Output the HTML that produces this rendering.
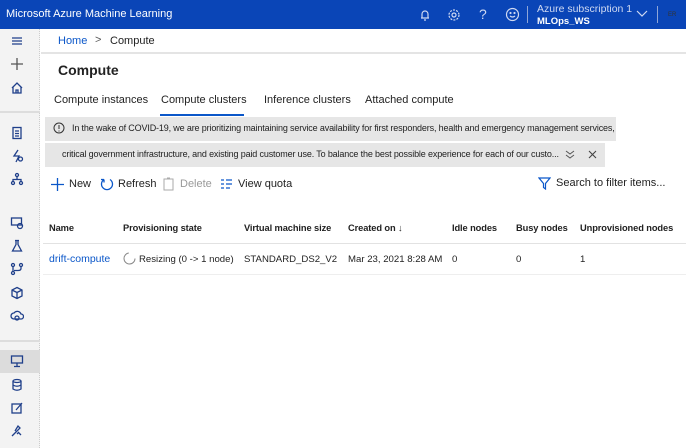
<!DOCTYPE html>
<html><head><style>
*{margin:0;padding:0;box-sizing:border-box}
body{width:686px;height:448px;overflow:hidden;background:#fff;font-family:"Liberation Sans",sans-serif;color:#222;position:relative;font-size:11px}
.a{position:absolute;white-space:nowrap}
.hdr{position:absolute;left:0;top:0;width:686px;height:29px;background:#0a45b7}
.side{position:absolute;left:0;top:29px;width:40px;height:419px;background:#f3f3f3;border-right:1px dotted #ccc}
.ic{position:absolute;left:10px;width:14px;height:14px}
.ic svg{width:14px;height:14px;fill:none;stroke:#1f3f8a;stroke-width:1.3}
.b{font-weight:bold}
.th{font-weight:bold;font-size:9.3px;letter-spacing:-.1px;top:223px}
.td{font-size:9.6px;top:254px}
.banner{position:absolute;background:#e6e6e6;height:24px}
</style></head><body>
<div class="hdr"></div>
<div class="a" style="left:6px;top:8px;color:#fff;font-size:11px">Microsoft Azure Machine Learning</div>
<svg class="a" style="left:418px;top:8px" width="14" height="14" fill="none" stroke="#cfd9f2" stroke-width="1.2"><path d="M3 10h8M4 10V6a3 3 0 016 0v4M6 12h2"/></svg>
<svg class="a" style="left:447px;top:8px" width="14" height="14" fill="none" stroke="#cfd9f2" stroke-width="1.2"><circle cx="7" cy="7" r="2"/><circle cx="7" cy="7" r="5" stroke-dasharray="2 1.2"/></svg>
<div class="a" style="left:479px;top:6px;color:#cfd9f2;font-size:14px">?</div>
<svg class="a" style="left:505px;top:7px" width="15" height="15" fill="none" stroke="#cfd9f2" stroke-width="1.2"><circle cx="7.5" cy="7.5" r="6"/><path d="M5 9q2.5 2 5 0"/><circle cx="5.5" cy="6" r=".5"/><circle cx="9.5" cy="6" r=".5"/></svg>
<div class="a" style="left:527px;top:6px;width:1px;height:17px;background:#8fa6d8"></div>
<div class="a" style="left:537px;top:3px;color:#cfd9f2;font-size:10.5px">Azure subscription 1</div>
<div class="a b" style="left:537px;top:16px;color:#fff;font-size:9.5px">MLOps_WS</div>
<svg class="a" style="left:636px;top:10px" width="12" height="8" fill="none" stroke="#cfd9f2" stroke-width="1.2"><path d="M1 1l5 5 5-5"/></svg>
<div class="a" style="left:657px;top:6px;width:1px;height:17px;background:#8fa6d8"></div>
<div class="a" style="left:668px;top:12px;color:#333;font-size:6px">ER</div>

<div class="side"></div>
<div class="a" style="left:0;top:111px;width:40px;height:2px;background:#ddd"></div>
<div class="a" style="left:0;top:340px;width:40px;height:2px;background:#ddd"></div>
<div class="a" style="left:0;top:350px;width:40px;height:23px;background:#dcdcdc"></div>
<div class="ic" style="top:34px"><svg><path d="M2 4h10M2 7h10M2 10h10"/></svg></div>
<div class="ic" style="top:57px"><svg style="stroke:#555"><path d="M7 1v12M1 7h12"/></svg></div>
<div class="ic" style="top:81px"><svg><path d="M2 7l5-5 5 5M3 6v6h8V6M6 12V9h2v3"/></svg></div>
<div class="ic" style="top:126px"><svg><rect x="3" y="1.5" width="8" height="11"/><path d="M5 5h4M5 7.5h4M5 10h4"/></svg></div>
<div class="ic" style="top:149px"><svg><path d="M8 1L4 7h5l-3 6"/><circle cx="10.5" cy="10" r="2"/></svg></div>
<div class="ic" style="top:172px"><svg><circle cx="7" cy="3" r="1.5"/><circle cx="3" cy="11" r="1.5"/><circle cx="11" cy="11" r="1.5"/><path d="M7 4.5v3M3 9.5V7.5h8v2"/></svg></div>
<div class="ic" style="top:216px"><svg><rect x="1.5" y="2" width="10" height="7"/><circle cx="10" cy="10" r="2.5"/></svg></div>
<div class="ic" style="top:239px"><svg><path d="M5 1.5h4M6 1.5v4L2.5 12h9L8 5.5v-4"/></svg></div>
<div class="ic" style="top:262px"><svg><circle cx="3" cy="3" r="1.5"/><circle cx="11" cy="3" r="1.5"/><circle cx="3" cy="11" r="1.5"/><path d="M3 4.5v5M11 4.5v2q0 2-3 2H4"/></svg></div>
<div class="ic" style="top:286px"><svg><path d="M7 1.5l5 2.5v6l-5 2.5-5-2.5V4zM2 4l5 2.5L12 4M7 6.5v6"/></svg></div>
<div class="ic" style="top:309px"><svg><path d="M4 10a3 3 0 010-6 4 4 0 017 1 2.5 2.5 0 010 5z"/><circle cx="7" cy="9" r="2"/></svg></div>
<div class="ic" style="top:354px"><svg><rect x="1.5" y="2" width="11" height="7"/><path d="M7 9v3M4 12.5h6"/></svg></div>
<div class="ic" style="top:378px"><svg><ellipse cx="7" cy="3" rx="4" ry="1.5"/><path d="M3 3v8q4 2.5 8 0V3M3 7q4 2.5 8 0"/></svg></div>
<div class="ic" style="top:401px"><svg><rect x="2" y="3" width="9" height="9"/><path d="M6 9l6-7"/></svg></div>
<div class="ic" style="top:424px"><svg><path d="M2 12l4-4M5 7l3-5 2 2-4 4M8 8l3 3M7 10l2-2"/></svg></div>

<div class="a" style="left:58px;top:35px;color:#0b57c9;font-size:11px">Home</div>
<div class="a" style="left:95px;top:34px;color:#555;font-size:11px">&gt;</div>
<div class="a" style="left:110px;top:35px;font-size:11px">Compute</div>
<div class="a" style="left:41px;top:52px;width:645px;height:2px;background:#e4e4e4"></div>
<div class="a b" style="left:58px;top:62px;font-size:14px">Compute</div>
<div class="a" style="left:54px;top:94px;font-size:11px">Compute instances</div>
<div class="a" style="left:161px;top:94px;font-size:11px">Compute clusters</div>
<div class="a" style="left:160px;top:114px;width:84px;height:2px;background:#0b57c9"></div>
<div class="a" style="left:264px;top:94px;font-size:11px">Inference clusters</div>
<div class="a" style="left:365px;top:94px;font-size:11px">Attached compute</div>

<div class="banner" style="left:45px;top:117px;width:571px"></div>
<div class="banner" style="left:45px;top:143px;width:560px"></div>
<svg class="a" style="left:53px;top:122px" width="12" height="12" fill="none" stroke="#333" stroke-width="1"><circle cx="6" cy="6" r="5"/><path d="M6 3v4M6 8.5v1"/></svg>
<div class="a" style="left:72px;top:123px;font-size:9px;letter-spacing:-.15px">In the wake of COVID-19, we are prioritizing maintaining service availability for first responders, health and emergency management services,</div>
<div class="a" style="left:62px;top:149px;font-size:9px;letter-spacing:-.15px">critical government infrastructure, and existing paid customer use. To balance the best possible experience for each of our custo...</div>
<svg class="a" style="left:565px;top:150px" width="10" height="9" fill="none" stroke="#555" stroke-width="1"><path d="M1 1l4 3 4-3M1 5l4 3 4-3"/></svg>
<svg class="a" style="left:588px;top:150px" width="9" height="9" fill="none" stroke="#444" stroke-width="1.1"><path d="M1 1l7 7M8 1l-7 7"/></svg>

<svg class="a" style="left:51px;top:178px" width="13" height="13" fill="none" stroke="#0b57c9" stroke-width="1.3"><path d="M6.5 0v13M0 6.5h13"/></svg>
<div class="a" style="left:69px;top:178px;font-size:11px">New</div>
<svg class="a" style="left:100px;top:177px" width="14" height="14" fill="none" stroke="#0b57c9" stroke-width="1.3"><path d="M4 2.5a5.5 5.5 0 106 0M4 2.5v3M4 2.5H1"/></svg>
<div class="a" style="left:118px;top:178px;font-size:11px">Refresh</div>
<svg class="a" style="left:163px;top:177px" width="11" height="14" fill="none" stroke="#aaa" stroke-width="1"><rect x="1" y="2" width="9" height="11"/><path d="M4 1h3"/></svg>
<div class="a" style="left:180px;top:178px;font-size:11px;color:#999">Delete</div>
<svg class="a" style="left:220px;top:178px" width="13" height="12" fill="none" stroke="#0b57c9" stroke-width="1.3"><path d="M1 2h3M6 2h6M1 6h3M6 6h6M1 10h3M6 10h4"/></svg>
<div class="a" style="left:238px;top:178px;font-size:11px">View quota</div>
<svg class="a" style="left:538px;top:177px" width="13" height="13" fill="none" stroke="#0b57c9" stroke-width="1.2"><path d="M1 1h11L7.5 6.5V12L5.5 10.5v-4z"/></svg>
<div class="a" style="left:556px;top:177px;font-size:11px">Search to filter items...</div>

<div class="a th" style="left:49px">Name</div>
<div class="a th" style="left:123px">Provisioning state</div>
<div class="a th" style="left:244px">Virtual machine size</div>
<div class="a th" style="left:348px">Created on ↓</div>
<div class="a th" style="left:452px">Idle nodes</div>
<div class="a th" style="left:516px">Busy nodes</div>
<div class="a th" style="left:580px">Unprovisioned nodes</div>
<div class="a" style="left:43px;top:243px;width:643px;height:1px;background:#e2e2e2"></div>
<div class="a td" style="left:49px;font-size:10.5px;top:253px;color:#0b57c9">drift-compute</div>
<svg class="a" style="left:123px;top:252px" width="13" height="13" fill="none" stroke="#888" stroke-width="1"><circle cx="6.5" cy="6.5" r="5.5" stroke-dasharray="25 10"/></svg>
<div class="a td" style="left:139px">Resizing (0 -&gt; 1 node)</div>
<div class="a td" style="left:244px">STANDARD_DS2_V2</div>
<div class="a td" style="left:348px">Mar 23, 2021 8:28 AM</div>
<div class="a td" style="left:452px">0</div>
<div class="a td" style="left:516px">0</div>
<div class="a td" style="left:580px">1</div>
<div class="a" style="left:43px;top:274px;width:643px;height:1px;background:#eee"></div>
</body></html>
